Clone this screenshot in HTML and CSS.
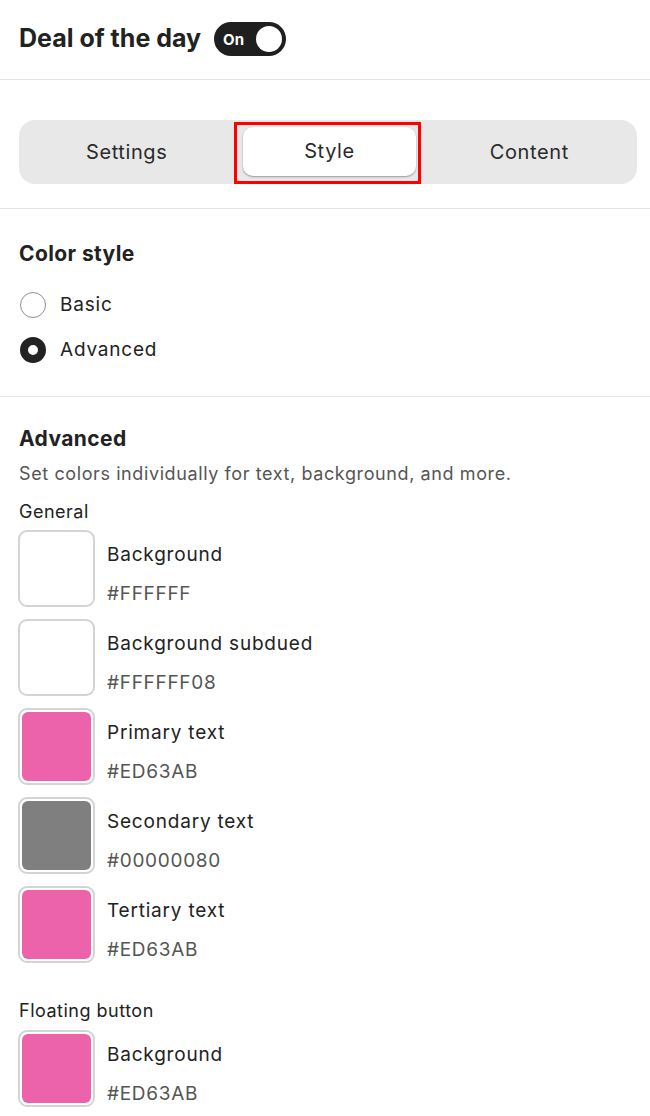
FILE: index.html
```html
<!DOCTYPE html>
<html lang="en">
<head>
    <meta charset="UTF-8">
    <meta name="viewport" content="width=device-width, initial-scale=1.0">
    <title>Deal of the day</title>
    <link rel="stylesheet" href="styles.css">
</head>
<body>
    <header class="top">
        <h1>Deal of the day</h1>
        <span class="toggle"><span class="toggle-text">On</span><span class="knob"></span></span>
    </header>

    <div class="tabs-wrap">
        <div class="tabs">
            <div class="tab">Settings</div>
            <div class="tab active">Style<span class="highlight"></span></div>
            <div class="tab">Content</div>
        </div>
    </div>

    <section class="block">
        <h2>Color style</h2>
        <label class="radio"><span class="dot"></span>Basic</label>
        <label class="radio"><span class="dot checked"></span>Advanced</label>
    </section>

    <section class="block colors">
        <h2>Advanced</h2>
        <p class="desc">Set colors individually for text, background, and more.</p>

        <div class="group-title">General</div>
        <div class="swatch-row">
            <div class="swatch"><span style="background: #FFFFFF;"></span></div>
            <div class="swatch-info"><div class="name">Background</div><div class="hex">#FFFFFF</div></div>
        </div>
        <div class="swatch-row">
            <div class="swatch"><span style="background: #FFFFFF08;"></span></div>
            <div class="swatch-info"><div class="name">Background subdued</div><div class="hex">#FFFFFF08</div></div>
        </div>
        <div class="swatch-row">
            <div class="swatch"><span style="background: #ED63AB;"></span></div>
            <div class="swatch-info"><div class="name">Primary text</div><div class="hex">#ED63AB</div></div>
        </div>
        <div class="swatch-row">
            <div class="swatch"><span style="background: #00000080;"></span></div>
            <div class="swatch-info"><div class="name">Secondary text</div><div class="hex">#00000080</div></div>
        </div>
        <div class="swatch-row">
            <div class="swatch"><span style="background: #ED63AB;"></span></div>
            <div class="swatch-info"><div class="name">Tertiary text</div><div class="hex">#ED63AB</div></div>
        </div>

        <div class="group-title spaced">Floating button</div>
        <div class="swatch-row">
            <div class="swatch"><span style="background: #ED63AB;"></span></div>
            <div class="swatch-info"><div class="name">Background</div><div class="hex">#ED63AB</div></div>
        </div>
    </section>
</body>
</html>
```

FILE: styles.css
```css
body {
    font-family: Inter, "Noto Sans", sans-serif;
    margin: 0;
    padding: 0;
    background-color: #fff;
    color: #222;
}
.top {
    display: flex;
    align-items: center;
    gap: 13px;
    height: 80px;
    padding: 0 19px 3px;
    border-bottom: 1px solid #e3e3e3;
    box-sizing: border-box;
}
h1 {
    font-size: 25px;
    font-weight: 700;
    margin: 0;
}
.toggle {
    display: flex;
    align-items: center;
    justify-content: space-between;
    width: 72px;
    height: 34px;
    padding: 0 4px 0 9px;
    box-sizing: border-box;
    background-color: #1f1f1f;
    border-radius: 17px;
    margin-top: 2px;
}
.toggle-text {
    color: #fff;
    font-size: 15px;
    font-weight: 700;
}
.knob {
    width: 26px;
    height: 26px;
    border-radius: 50%;
    background-color: #fff;
}
.tabs-wrap {
    padding: 40px 13px 24px 19px;
    border-bottom: 1px solid #e3e3e3;
}
.tabs {
    display: grid;
    grid-template-columns: 1fr 1fr 1fr;
    align-items: center;
    height: 64px;
    padding: 0 7px;
    background-color: #e8e8e8;
    border-radius: 16px;
}
.tab {
    text-align: center;
    font-size: 20px;
    letter-spacing: 0.6px;
    color: #2a2a2a;
}
.tab.active {
    position: relative;
    background-color: #fff;
    height: 49px;
    line-height: 49px;
    border-radius: 10px;
    box-shadow: 0 1px 2px rgba(0, 0, 0, 0.35);
    margin: 0 13px 1px 16px;
}
.highlight {
    position: absolute;
    left: -9px;
    right: -5px;
    top: -5px;
    bottom: -8px;
    border: 3px solid #f00;
}
.block {
    padding: 32px 19px 24px;
    border-bottom: 1px solid #e3e3e3;
}
.block.colors {
    border-bottom: none;
    padding-top: 29px;
}
h2 {
    font-size: 21px;
    font-weight: 700;
    letter-spacing: 0.4px;
    margin: 0 0 16px;
}
.radio {
    display: flex;
    align-items: center;
    gap: 14px;
    font-size: 19px;
    letter-spacing: 0.8px;
    height: 45px;
}
.dot {
    width: 26px;
    height: 26px;
    border: 1px solid #8f8f8f;
    border-radius: 50%;
    box-sizing: border-box;
    margin-left: 1px;
}
.dot.checked {
    border: 8px solid #222;
}
.desc {
    font-size: 18px;
    letter-spacing: 0.6px;
    color: #555;
    margin: -4px 0 17px;
}
.group-title {
    font-size: 18px;
    letter-spacing: 0.5px;
    margin-bottom: 8px;
}
.group-title.spaced {
    margin-top: 37px;
    margin-bottom: 9px;
}
.swatch-row {
    display: flex;
    gap: 12px;
    margin-bottom: 12px;
    margin-left: -1px;
}
.swatch {
    width: 77px;
    height: 77px;
    border: 2px solid #d4d4d4;
    border-radius: 9px;
    padding: 2px;
    box-sizing: border-box;
    background-color: #fff;
}
.swatch span {
    display: block;
    width: 100%;
    height: 100%;
    border-radius: 6px;
}
.swatch-info {
    padding-top: 12px;
    font-size: 19px;
    letter-spacing: 0.8px;
    line-height: 26px;
}
.hex {
    margin-top: 13px;
    color: #555;
    letter-spacing: 0.7px;
}
```
